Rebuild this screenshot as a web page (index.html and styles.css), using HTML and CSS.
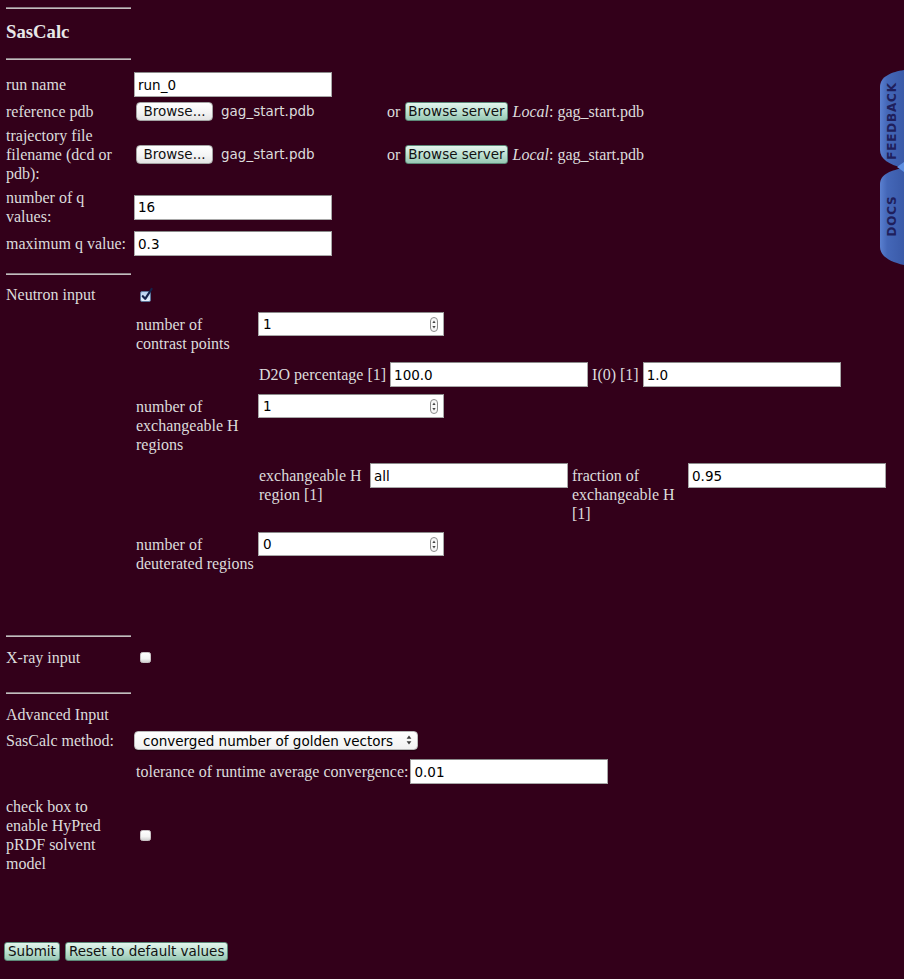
FILE: index.html
```html
<!DOCTYPE html>
<html lang="en">
<head>
<meta charset="utf-8">
<title>SasCalc</title>
<link rel="stylesheet" href="styles.css">
</head>
<body>
<main class="page">
  <hr class="rule">
  <h3 class="title">SasCalc</h3>
  <hr class="rule">

  <section class="fields">
    <label class="lbl" for="runname">run name</label>
    <div class="ctl"><input id="runname" class="text" type="text" value="run_0"></div>

    <span class="lbl">reference pdb</span>
    <div class="ctl file-row">
      <span class="file-pick"><button class="btn btn-file" type="button">Browse...</button><span class="fname">gag_start.pdb</span></span>
      <span class="or">or</span>
      <button class="btn btn-green btn-server" type="button">Browse server</button>
      <span class="local"><em>Local</em>: gag_start.pdb</span>
    </div>

    <span class="lbl">trajectory file filename (dcd or pdb):</span>
    <div class="ctl file-row">
      <span class="file-pick"><button class="btn btn-file" type="button">Browse...</button><span class="fname">gag_start.pdb</span></span>
      <span class="or">or</span>
      <button class="btn btn-green btn-server" type="button">Browse server</button>
      <span class="local"><em>Local</em>: gag_start.pdb</span>
    </div>

    <label class="lbl" for="nq">number of q values:</label>
    <div class="ctl"><input id="nq" class="text" type="text" value="16"></div>

    <label class="lbl" for="maxq">maximum q value:</label>
    <div class="ctl"><input id="maxq" class="text" type="text" value="0.3"></div>
  </section>

  <hr class="rule rule-neutron">

  <section class="toggle toggle-neutron">
    <span class="lbl">Neutron input</span>
    <span class="ctl">
      <svg class="cb cb-on" width="14" height="15" viewBox="0 0 14 15" aria-hidden="true">
        <defs>
          <linearGradient id="cbOn" x1="0" y1="0" x2="0" y2="1">
            <stop offset="0" stop-color="#b3cdee"/>
            <stop offset="1" stop-color="#eaf2fc"/>
          </linearGradient>
        </defs>
        <rect x="0.5" y="4.5" width="10" height="10" rx="1.5" fill="url(#cbOn)" stroke="#5d7499"/>
        <path d="M2.8,9.2 L5.2,11.8 L11.6,2" fill="none" stroke="#14214a" stroke-width="2.2" stroke-linecap="round" stroke-linejoin="round"/>
      </svg>
    </span>
  </section>

  <section class="sub">
    <span class="sub-lbl">number of contrast points</span>
    <div class="spin">
      <input class="spin-field" type="text" value="1">
      <svg class="spin-arrows" width="8" height="15" viewBox="0 0 8 15" aria-hidden="true">
        <rect x="0.5" y="0.5" width="7" height="14" rx="3.5" fill="#f7f7f7" stroke="#8a8a8a"/>
        <path d="M2.4,6 L4,3.6 L5.6,6 Z" fill="#444"/>
        <path d="M2.4,9 L4,11.4 L5.6,9 Z" fill="#444"/>
      </svg>
    </div>

    <div class="sub-line d2o-line">
      <span class="inline-lbl">D2O percentage [1]</span>
      <input class="text" type="text" value="100.0">
      <span class="inline-lbl">I(0) [1]</span>
      <input class="text" type="text" value="1.0">
    </div>

    <span class="sub-lbl">number of exchangeable H regions</span>
    <div class="spin">
      <input class="spin-field" type="text" value="1">
      <svg class="spin-arrows" width="8" height="15" viewBox="0 0 8 15" aria-hidden="true">
        <rect x="0.5" y="0.5" width="7" height="14" rx="3.5" fill="#f7f7f7" stroke="#8a8a8a"/>
        <path d="M2.4,6 L4,3.6 L5.6,6 Z" fill="#444"/>
        <path d="M2.4,9 L4,11.4 L5.6,9 Z" fill="#444"/>
      </svg>
    </div>

    <div class="sub-line">
      <span class="inline-lbl w-exch">exchangeable H region [1]</span>
      <input class="text" type="text" value="all">
      <span class="inline-lbl w-frac">fraction of exchangeable H [1]</span>
      <input class="text" type="text" value="0.95">
    </div>

    <span class="sub-lbl">number of deuterated regions</span>
    <div class="spin">
      <input class="spin-field" type="text" value="0">
      <svg class="spin-arrows" width="8" height="15" viewBox="0 0 8 15" aria-hidden="true">
        <rect x="0.5" y="0.5" width="7" height="14" rx="3.5" fill="#f7f7f7" stroke="#8a8a8a"/>
        <path d="M2.4,6 L4,3.6 L5.6,6 Z" fill="#444"/>
        <path d="M2.4,9 L4,11.4 L5.6,9 Z" fill="#444"/>
      </svg>
    </div>
  </section>

  <hr class="rule rule-xray">

  <section class="toggle toggle-xray">
    <span class="lbl">X-ray input</span>
    <span class="ctl">
      <svg class="cb cb-off" width="11" height="11" viewBox="0 0 11 11" aria-hidden="true">
        <defs>
          <linearGradient id="cbOff" x1="0" y1="0" x2="0" y2="1">
            <stop offset="0" stop-color="#ffffff"/>
            <stop offset="0.6" stop-color="#f4f4f4"/>
            <stop offset="1" stop-color="#cfcfcf"/>
          </linearGradient>
        </defs>
        <rect x="0.5" y="0.5" width="10" height="10" rx="2" fill="url(#cbOff)" stroke="#c9c2c5"/>
      </svg>
    </span>
  </section>

  <hr class="rule rule-adv">

  <div class="adv-title">Advanced Input</div>

  <section class="method">
    <label class="lbl" for="method">SasCalc method:</label>
    <div class="popup">
      <select id="method" class="popup-select">
        <option>converged number of golden vectors</option>
      </select>
      <svg class="popup-arrows" width="6" height="12" viewBox="0 0 6 12" aria-hidden="true">
        <path d="M0.6,4.8 L3,1.4 L5.4,4.8 Z" fill="#3a3a3a"/>
        <path d="M0.6,7.2 L3,10.6 L5.4,7.2 Z" fill="#3a3a3a"/>
      </svg>
    </div>
    <div class="tol-line">
      <span class="inline-lbl">tolerance of runtime average convergence:</span>
      <input class="text" type="text" value="0.01">
    </div>
  </section>

  <section class="toggle toggle-hypred">
    <span class="lbl">check box to enable HyPred pRDF solvent model</span>
    <span class="ctl">
      <svg class="cb cb-off" width="11" height="11" viewBox="0 0 11 11" aria-hidden="true">
        <rect x="0.5" y="0.5" width="10" height="10" rx="2" fill="url(#cbOff)" stroke="#c9c2c5"/>
      </svg>
    </span>
  </section>

  <div class="actions">
    <button class="btn btn-green" type="button">Submit</button>
    <button class="btn btn-green" type="button">Reset to default values</button>
  </div>
</main>

<svg class="side-tabs" width="26" height="200" viewBox="0 0 26 200" aria-label="Feedback and docs tabs">
  <defs>
    <linearGradient id="tabFill" x1="0" y1="0" x2="1" y2="0">
      <stop offset="0" stop-color="#5a80d0"/>
      <stop offset="0.3" stop-color="#4467b8"/>
      <stop offset="1" stop-color="#3a5aa8"/>
    </linearGradient>
  </defs>
  <path d="M26,4 C14,6 2,10 2,21 L2,84 C2,93 11,99 26,102 Z" fill="url(#tabFill)"/>
  <path d="M26,102 C14,104 2,108 2,118 L2,181 C2,190 12,196 26,199 Z" fill="url(#tabFill)"/>
  <path d="M19,101 L26,96 L26,106 Z" fill="#5f90e2"/>
  <text class="tab-text" transform="translate(18,55) rotate(-90)" text-anchor="middle">FEEDBACK</text>
  <text class="tab-text" transform="translate(18,150) rotate(-90)" text-anchor="middle">DOCS</text>
</svg>
</body>
</html>
```

FILE: styles.css
```css
* {
  box-sizing: border-box;
}

html {
  background: #33001a;
}

body {
  margin: 0;
  width: 904px;
  min-height: 979px;
  position: relative;
  overflow: hidden;
  background: #33001a;
  color: #dcdcdc;
  font-family: "Liberation Serif", "Times New Roman", serif;
  font-size: 16px;
  line-height: 19px;
}

.page {
  padding: 7px 4px 0;
}

/* horizontal rules */
.rule {
  display: block;
  width: 125px;
  height: 2px;
  margin: 0 0 0 2px;
  border: 0;
  border-top: 1px solid #8b7e84;
  border-bottom: 1px solid #c4bcbf;
}

.rule.rule-neutron {
  margin-top: 17px;
}

.rule.rule-xray {
  margin-top: 62px;
}

.rule.rule-adv {
  margin-top: 25px;
}

.title {
  margin: 12px 0 15px 2px;
  font-size: 18.72px;
  line-height: 22px;
  font-weight: bold;
  color: #e8e8e8;
}

/* buttons */
.btn {
  height: 19px;
  margin: 0;
  padding: 0 3px;
  font-family: "DejaVu Sans", Verdana, sans-serif;
  font-size: 13.5px;
  line-height: 17px;
  color: #111;
  border-radius: 4px;
  white-space: nowrap;
}

.btn-file {
  width: 77px;
  padding: 0;
  border: 1px solid #a3a3a3;
  background: linear-gradient(#ffffff, #f4f4f4 55%, #e3e3e3);
}

.btn-green {
  border: 1px solid #5d8a79;
  border-radius: 3px;
  background: linear-gradient(#e3f5ed, #c2e3d5 45%, #98c8b4);
}

/* top field table */
.fields {
  margin-top: 12px;
  display: grid;
  grid-template-columns: 130px 1fr;
  row-gap: 5px;
  align-items: center;
}

.lbl {
  padding: 0 4px 0 2px;
}

.ctl {
  display: block;
}

.text {
  display: block;
  flex: none;
  width: 198px;
  height: 25px;
  margin: 0;
  padding: 0 3px;
  border: 1px solid #a8a8a8;
  border-top-color: #8a8a8a;
  background: #fff;
  color: #000;
  font-family: "DejaVu Sans", Verdana, sans-serif;
  font-size: 13.5px;
  outline: none;
}

.file-row {
  display: flex;
  align-items: center;
}

.file-pick {
  display: flex;
  align-items: center;
  gap: 8px;
  width: 248px;
  margin-left: 2px;
}

.fname {
  font-family: "DejaVu Sans", Verdana, sans-serif;
  font-size: 13.5px;
  color: #dcdcdc;
}

.file-row .or {
  margin-left: 3px;
}

.file-row .btn-server {
  margin-left: 5px;
  padding: 0 2px;
}

.file-row .local {
  margin-left: 5px;
}

/* toggle rows (label + checkbox) */
.toggle {
  display: grid;
  grid-template-columns: 130px 1fr;
  align-items: center;
}

.toggle-neutron {
  margin-top: 10px;
}

.toggle-xray {
  margin-top: 11px;
}

.toggle-hypred {
  margin-top: 13px;
}

.cb {
  display: block;
  margin-left: 6px;
}

/* nested neutron table */
.sub {
  margin: 8px 0 0 130px;
  display: grid;
  grid-template-columns: 124px 1fr;
  row-gap: 9px;
  align-items: start;
}

.sub-lbl {
  padding: 3px 3px 0 2px;
}

.spin {
  display: flex;
  align-items: center;
  width: 186px;
  height: 24px;
  border: 1px solid #a8a8a8;
  border-top-color: #8a8a8a;
  background: #fff;
}

.spin-field {
  flex: 1;
  min-width: 0;
  height: 22px;
  margin: 0;
  padding: 0 0 0 4px;
  border: 0;
  background: transparent;
  color: #000;
  font-family: "DejaVu Sans", Verdana, sans-serif;
  font-size: 13.5px;
  outline: none;
}

.spin-arrows {
  flex: none;
  margin-right: 5px;
}

.sub-line {
  grid-column: 2;
  display: flex;
  align-items: flex-start;
  gap: 4px;
  padding-left: 1px;
}

.d2o-line {
  margin-bottom: -2px;
}

.inline-lbl {
  flex: none;
  padding-top: 3px;
}

.w-exch {
  width: 107px;
}

.w-frac {
  width: 112px;
}

/* advanced */
.adv-title {
  margin: 11px 0 0 2px;
}

.method {
  margin-top: 7px;
  display: grid;
  grid-template-columns: 130px 1fr;
  row-gap: 9px;
  align-items: center;
}

.popup {
  position: relative;
  width: 284px;
  height: 19px;
}

.popup-select {
  -webkit-appearance: none;
  appearance: none;
  display: block;
  width: 100%;
  height: 19px;
  margin: 0;
  padding: 0 0 0 8px;
  border: 1px solid #b9b9b9;
  border-radius: 4px;
  background: linear-gradient(#ffffff, #f1f1f1);
  color: #000;
  font-family: "DejaVu Sans", Verdana, sans-serif;
  font-size: 13.5px;
  box-shadow: 0 1px 1px rgba(0, 0, 0, 0.3);
  outline: none;
}

.popup-arrows {
  position: absolute;
  right: 6px;
  top: 3px;
  pointer-events: none;
}

.tol-line {
  grid-column: 2;
  display: flex;
  align-items: flex-start;
  gap: 2px;
  padding-left: 2px;
}

/* submit row */
.actions {
  margin-top: 69px;
  display: flex;
  gap: 5px;
}

/* side tabs */
.side-tabs {
  position: absolute;
  top: 66px;
  right: 0;
  display: block;
}

.tab-text {
  font-family: "DejaVu Sans", Verdana, sans-serif;
  font-weight: bold;
  font-size: 12px;
  letter-spacing: 0.8px;
  fill: #1f1f5c;
}
```
